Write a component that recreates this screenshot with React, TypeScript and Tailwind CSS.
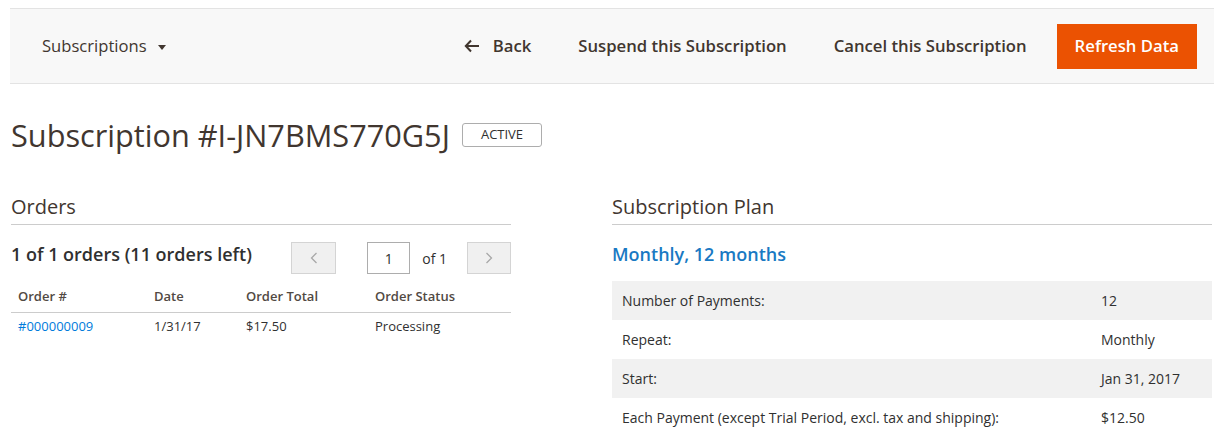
import React from 'react';

const FONT = { fontFamily: '"Open Sans", "Liberation Sans", sans-serif' };

const PLAN_ROWS = [
  { label: 'Number of Payments:', value: '12' },
  { label: 'Repeat:', value: 'Monthly' },
  { label: 'Start:', value: 'Jan 31, 2017' },
  { label: 'Each Payment (except Trial Period, excl. tax and shipping):', value: '$12.50' },
];

export default function App() {
  return (
    <div className="min-h-[443px] bg-white pt-2 px-[11px] text-[#303030]" style={FONT}>
      {/* Page actions */}
      <div className="flex items-center h-[76px] bg-[#f8f8f8] border-y border-[#e3e3e3] -ml-px pl-[32px] pr-[17px]">
        <button className="flex items-center gap-[11px] text-[16.6px] text-[#41362f]">
          Subscriptions
          <span className="inline-block w-0 h-0 border-x-[4px] border-x-transparent border-t-[5px] border-t-[#41362f] mt-[3px]" />
        </button>
        <div className="ml-auto flex items-center">
          <button className="flex items-center gap-[13px] text-[16.7px] font-semibold text-[#41362f]">
            <svg width="16" height="14" viewBox="0 0 16 14" fill="none" stroke="#41362f" strokeWidth="2">
              <path d="M15 7H2M7 1.5L1.8 7L7 12.5" />
            </svg>
            Back
          </button>
          <button className="ml-[47px] text-[16.7px] font-semibold text-[#41362f]">Suspend this Subscription</button>
          <button className="ml-[47px] text-[16.7px] font-semibold text-[#41362f]">Cancel this Subscription</button>
          <button className="ml-[30px] h-[45px] px-[18px] bg-[#eb5202] text-white text-[16.7px] font-semibold">Refresh Data</button>
        </div>
      </div>

      {/* Title */}
      <div className="flex items-center gap-[12px] mt-[31px]">
        <h1 className="text-[30.7px] leading-[40px] text-[#41362f] font-normal">Subscription #I-JN7BMS770G5J</h1>
        <span className="h-[24px] px-[18px] flex items-center border border-[#adadad] rounded-[3px] text-[13px] text-[#303030] uppercase">Active</span>
      </div>

      <div className="flex gap-[101px] mt-[38px]">
        {/* Orders */}
        <section className="w-[500px]">
          <h2 className="text-[20px] leading-[28px] text-[#41362f] pb-[3px] border-b border-[#cccccc]">Orders</h2>
          <div className="flex items-center mt-[17px] h-[32px]">
            <span className="mb-[8px] text-[18px] font-semibold text-[#303030]">1 of 1 orders (11 orders left)</span>
            <button className="ml-auto w-[45px] h-[32px] bg-[#f0f0f0] border border-[#d4d4d4] flex items-center justify-center">
              <svg width="8" height="12" viewBox="0 0 8 12" fill="none" stroke="#a8a8a8" strokeWidth="1.3"><path d="M6.5 1L1.5 6l5 5" /></svg>
            </button>
            <div className="ml-[31px] w-[43px] h-[32px] border border-[#adadad] flex items-center justify-center text-[14px]">1</div>
            <span className="ml-[12px] text-[14px] text-[#303030]">of 1</span>
            <button className="ml-[20px] w-[44px] h-[32px] bg-[#f0f0f0] border border-[#d4d4d4] flex items-center justify-center">
              <svg width="8" height="12" viewBox="0 0 8 12" fill="none" stroke="#a8a8a8" strokeWidth="1.3"><path d="M1.5 1l5 5-5 5" /></svg>
            </button>
          </div>
          <table className="w-full mt-[7px] text-[13px]">
            <thead>
              <tr className="border-b border-[#cccccc] text-left text-[#514943]">
                <th className="font-semibold pl-[7px] pt-[6px] pb-[5px] w-[143px]">Order #</th>
                <th className="font-semibold pt-[6px] pb-[5px] w-[92px]">Date</th>
                <th className="font-semibold pt-[6px] pb-[5px] w-[129px]">Order Total</th>
                <th className="font-semibold pt-[6px] pb-[5px]">Order Status</th>
              </tr>
            </thead>
            <tbody>
              <tr className="text-[#303030]">
                <td className="pl-[7px] pt-[4px] text-[#007bdb]">#000000009</td>
                <td className="pt-[4px]">1/31/17</td>
                <td className="pt-[4px]">$17.50</td>
                <td className="pt-[4px]">Processing</td>
              </tr>
            </tbody>
          </table>
        </section>

        {/* Subscription plan */}
        <section className="w-[600px]">
          <h2 className="text-[20px] leading-[28px] text-[#41362f] pb-[3px] border-b border-[#cccccc]">Subscription Plan</h2>
          <div className="mt-[17px] h-[24px] flex items-center text-[18px] font-semibold text-[#1979c3]">Monthly, 12 months</div>
          <div className="mt-[15px] text-[14px]">
            {PLAN_ROWS.map((r, i) => (
              <div key={r.label} className={`flex items-center h-[39px] ${i % 2 === 0 ? 'bg-[#f1f1f1]' : ''}`}>
                <span className="pl-[10px] w-[489px]">{r.label}</span>
                <span>{r.value}</span>
              </div>
            ))}
          </div>
        </section>
      </div>
    </div>
  );
}
